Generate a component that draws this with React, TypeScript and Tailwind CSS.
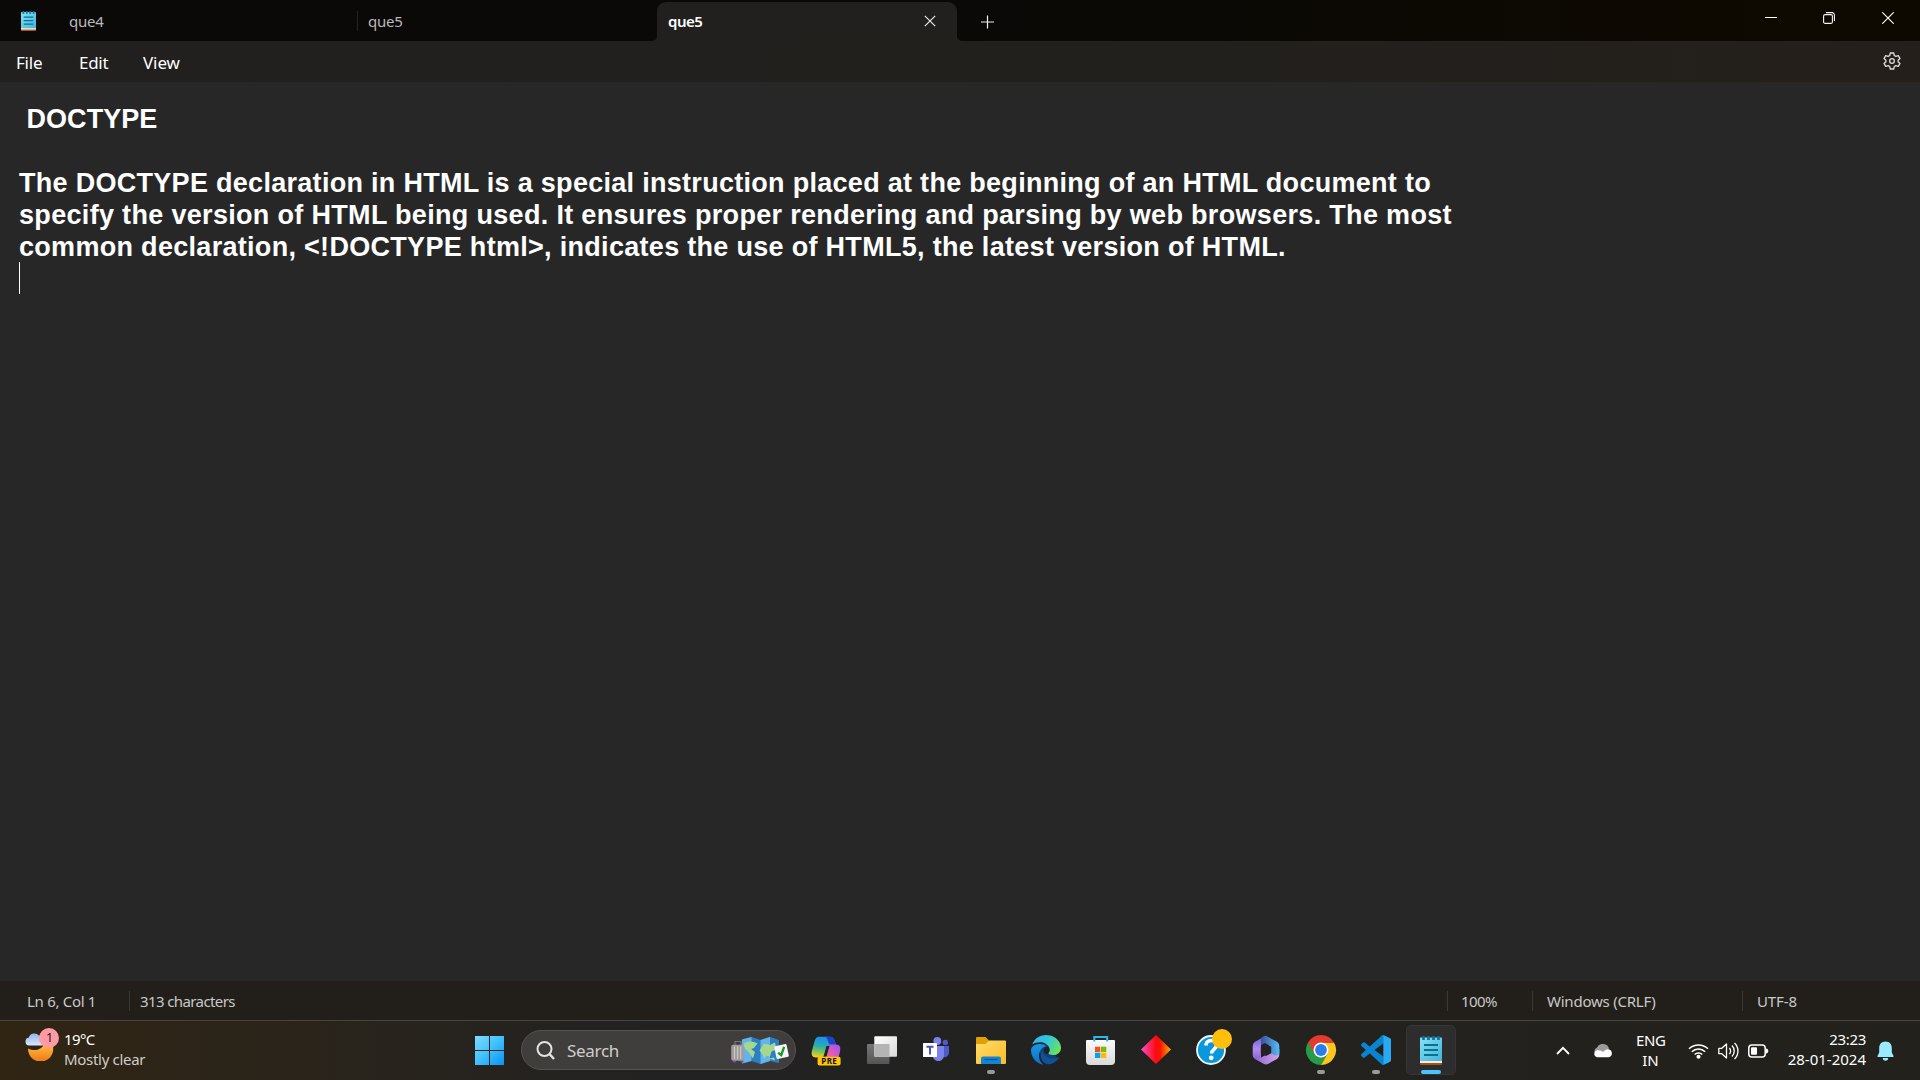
import React from "react";

const Cell = ({ children }: { children: React.ReactNode }) => (
  <svg width="55" height="59" viewBox="0 0 55 59" className="block shrink-0">{children}</svg>
);
const Dot = () => <rect x="23" y="49" width="8" height="4" rx="2" fill="#9a9a9a" />;

const Notepad = ({ className }: { className: string }) => (
  <svg viewBox="0 0 22 29" preserveAspectRatio="none" className={className}>
    <defs>
      <linearGradient id="np" x1="0" y1="0" x2="1" y2="1"><stop stopColor="#86e0f5" /><stop offset="1" stopColor="#42b4d8" /></linearGradient>
    </defs>
    <rect y="24" width="22" height="5" rx="1" fill="#a9510f" />
    <rect y="22" width="22" height="5" fill="#f3ece4" />
    <rect y="1.6" width="22" height="23.4" rx="0.6" fill="url(#np)" />
    <path d="M3.5 0v4M8.5 0v4M13.5 0v4M18.5 0v4" stroke="#0c6f93" strokeWidth="2.6" />
    <path d="M4 9h14M4 14h14M4 19h14" stroke="#0b7094" strokeWidth="1.9" />
  </svg>
);

const Sep = ({ className }: { className: string }) => <div className={"h-5 w-px shrink-0 bg-[#3b3935] " + className} />;

function TitleBar() {
  return (
    <div className="flex h-[41px] bg-linear-to-r from-[#0a0908] via-[#0a0907] via-50% to-[#0e0900] text-[15px] text-[#b9b9b8]">
      <div className="w-[69px] pl-[21px] pt-[11px]"><Notepad className="h-5 w-[15px]" /></div>
      <div className="flex h-[41px] w-[288px] items-center pt-px"><span className="tracking-[-0.25px]">que4</span></div>
      <div className="flex w-[300px] items-center">
        <div className="h-5 w-px bg-[#232220]" />
        <span className="pl-[10px] pt-px tracking-[-0.25px]">que5</span>
      </div>
      <div className="relative mt-[2px] flex w-[300px] items-center rounded-t-[9px] bg-[#21201e] pb-px pl-[11px] font-semibold text-white">
        <span className="tracking-[-0.5px]">que5</span>
        <svg className="absolute -left-[5px] bottom-0" width="5" height="5"><path d="M5 0v5H0A5 5 0 0 0 5 0" fill="#21201e" /></svg>
        <svg className="absolute -right-[5px] bottom-0" width="5" height="5"><path d="M0 0v5h5A5 5 0 0 1 0 0" fill="#21201e" /></svg>
        <svg className="absolute left-[267px] top-[13px]" width="12" height="12"><path d="M.8.8l10.4 10.4M11.2.8L.8 11.2" stroke="#e9e9e9" strokeWidth="1.2" /></svg>
      </div>
      <svg className="ml-[24px] mt-[15px]" width="13" height="14"><path d="M0 7h13M6.5 .5v13" stroke="#f0f0f0" strokeWidth="1.2" /></svg>
      <div className="ml-auto flex pt-[12px]">
        <svg className="mr-[46px]" width="12" height="12"><path d="M0 5.5h12" stroke="#fff" /></svg>
        <svg className="mr-[47px]" width="12" height="12" fill="none" stroke="#f4f4f4" strokeWidth="1.1"><rect x=".6" y="2.6" width="8.8" height="8.8" rx="1.5" /><path d="M3 .6h6a2.4 2.4 0 0 1 2.4 2.4v6" /></svg>
        <svg className="mr-[26px]" width="12" height="12"><path d="M.3.3l11.4 11.4M11.7.3L.3 11.7" stroke="#fff" strokeWidth="1.1" /></svg>
      </div>
    </div>
  );
}

function MenuBar() {
  return (
    <div className="flex h-[41px] items-center bg-linear-to-r from-[#21201f] via-[#21201d] to-[#241f1b] pl-4 text-[17px] text-white">
      <span className="w-[63px] pt-[2px] tracking-[-0.2px]">File</span>
      <span className="w-[64px] pt-[2px] tracking-[-0.3px]">Edit</span>
      <span className="pt-[2px] tracking-[-0.1px]">View</span>
      <svg className="mb-px ml-auto mr-[19px]" width="18" height="18" fill="none" stroke="#dedede" strokeWidth="1.3" strokeLinejoin="round">
        <path d="M7.300 1h3.400l.6 2.500 1.500.9 2.500-.8 1.700 3-1.900 1.700v1.400l1.900 1.700-1.700 3-2.500-.8-1.500.9-.6 2.500H7.300l-.6-2.500-1.500-.9-2.500.8-1.700-3 1.900-1.700V8.300L1 6.600l1.700-3 2.500.8 1.500-.9z" />
        <circle cx="9" cy="9" r="2.300" />
      </svg>
    </div>
  );
}

function Editor() {
  return (
    <div className="h-[899px] bg-[#272727] pl-[19px] pt-[21px] font-['Liberation_Sans',sans-serif] text-[27px] font-bold leading-8 text-white">
      <div className="whitespace-pre pl-[7.500px] tracking-[0.05px]">DOCTYPE</div>
      <div className="h-8" />
      <div className="whitespace-pre tracking-[0.290px]">The DOCTYPE declaration in HTML is a special instruction placed at the beginning of an HTML document to</div>
      <div className="whitespace-pre tracking-[0.320px]">specify the version of HTML being used. It ensures proper rendering and parsing by web browsers. The most</div>
      <div className="whitespace-pre tracking-[0.300px]">common declaration, &lt;!DOCTYPE html&gt;, indicates the use of HTML5, the latest version of HTML.</div>
      <div className="-mt-px h-8 w-px bg-white" />
    </div>
  );
}

function StatusBar() {
  return (
    <div className="flex h-[39px] items-center bg-[#221f1b] pl-[27px] pt-px text-[15px] text-[#c9c8c7]">
      <span className="w-[102px] tracking-[-0.3px]">Ln 6, Col 1</span>
      <Sep className="mr-[10px]" />
      <span className="tracking-[-0.6px]">313 characters</span>
      <div className="ml-auto flex w-[473px] items-center">
        <Sep className="mr-[13px]" /><span className="w-[71px] tracking-[-0.6px]">100%</span>
        <Sep className="mr-[14px]" /><span className="w-[195px] tracking-[-0.230px]">Windows (CRLF)</span>
        <Sep className="mr-[14px]" /><span className="tracking-[-0.1px]">UTF-8</span>
      </div>
    </div>
  );
}

function Weather() {
  return (
    <svg width="36" height="34" viewBox="0 0 36 34" className="block">
      <defs>
        <linearGradient id="mn" x1="0" y1="0" x2="0" y2="1"><stop stopColor="#ffc13a" /><stop offset="1" stopColor="#f0791c" /></linearGradient>
        <linearGradient id="cl" x1="0" y1="0" x2="0" y2="1"><stop stopColor="#8fb4ee" /><stop offset="1" stopColor="#dbe8fb" /></linearGradient>
      </defs>
      <path d="M3 21.500c7 3.500 14 1 16.500-5l8.500 2c1.500 9-4 16-12.500 16C8.500 34.500 3 29 3 21.500z" fill="url(#mn)" />
      <path d="M4 18.500a4 4 0 0 1-.2-7.900A6 6 0 0 1 14 8.500a5 5 0 0 1 3 10z" fill="url(#cl)" />
      <circle cx="24" cy="11" r="10" fill="#ff99a4" />
      <text x="24.500" y="15.300" textAnchor="middle" fontSize="12.500" fill="#1a1a1a" fontFamily="Noto Sans">1</text>
    </svg>
  );
}

function SearchArt() {
  return (
    <svg width="60" height="30" viewBox="0 0 60 30" className="block">
      <path d="M12 4.500L21.500 2 30.500 5 40 2l9 3v23l-9-2-9.500 3-9-3-9.500 2.500z" fill="#2b7fc4" />
      <path d="M12 4.500L21.500 2v24L12 28.500zM30.500 5L40 2v24l-9.500 3z" fill="#62b4ea" />
      <path d="M13.500 9c3-3 8-3.500 14-.5l-3.500 4.500-3 1 4 3-2 6.500-4-6-4-4z" fill="#a5d88d" />
      <path d="M29.500 15.500l4.500-7 6 1.500 5-2.500 1.500 7-5 2-1.500 5-4-1-1.500 3.500-2-4.500zM39 23.500l5-1 1 3z" fill="#a5d88d" />
      <path d="M5 10V6.500h6V10" fill="none" stroke="#77727c" strokeWidth="1.200" />
      <path d="M3 26.500h3M10.500 26.500h3" stroke="#7445c0" strokeWidth="2" />
      <rect x="1.200" y="9.800" width="12.800" height="16" rx="2" fill="#a09d9c" />
      <path d="M4.500 11.500v12.500M7.600 11.500v12.500M10.700 11.500v12.500" stroke="#cbc8c6" strokeWidth="1.100" />
      <g transform="rotate(-12 51.500 16.500)"><rect x="45.300" y="10" width="12.500" height="13" rx="1" fill="#f7f5fb" /><path d="M48 17l2.500 3 4.500-7.500" fill="none" stroke="#189c26" strokeWidth="2.400" /></g>
    </svg>
  );
}

function Apps() {
  return (
    <div className="flex">
      <Cell>
        <defs>
          <linearGradient id="ca" x1=".4" y1="0" x2=".2" y2="1"><stop stopColor="#1b8df0" /><stop offset=".45" stopColor="#2aaeb0" /><stop offset=".7" stopColor="#7cc455" /><stop offset="1" stopColor="#ffd020" /></linearGradient>
          <linearGradient id="cb" x1="1" y1="0" x2="0" y2="1"><stop stopColor="#9a55f5" /><stop offset=".5" stopColor="#e75bb4" /><stop offset="1" stopColor="#ff8b4a" /></linearGradient>
        </defs>
        <path d="M20 15.700h11c3 0 4 2 5 5l1 3.300h-5.500c-2 0-3 1.500-4 4.500l-1.500 5c-.8 2-2 3-4 3H17c-4 0-5-3-4-7l2.500-9c.8-3 2-4.800 4.500-4.800z" fill="url(#ca)" />
        <path d="M26 15.700h5c3 0 4 2 5 5l1 3.300h-5c-3 0-3-8.300-6-8.300z" fill="#1b43d0" />
        <path d="M32 23.500h5c4 0 5 3 4 7l-2 8c-1 3-2 4-5 4H24c-3 0-3-3-2-5h2c2 0 3-2 4-6l1.500-5c.5-1.700 1-3 2.500-3z" fill="url(#cb)" />
        <path d="M27.500 25l-3 10.500h3L30.500 25z" fill="#222" />
        <rect x="18.600" y="35.700" width="23" height="8.800" rx="2" fill="#ffc60a" />
        <text x="30.300" y="43" textAnchor="middle" fontSize="8" letterSpacing=".4" fontWeight="700" fontFamily="Noto Sans" fill="#111">PRE</text>
      </Cell>
      <Cell>
        <defs><linearGradient id="tv" x1="0" y1="0" x2="1" y2="1"><stop stopColor="#fff" /><stop offset="1" stopColor="#d9d9d9" /></linearGradient><linearGradient id="tg" x1="0" y1="0" x2="0" y2="1"><stop stopColor="#777" /><stop offset="1" stopColor="#555" /></linearGradient></defs>
        <rect x="13" y="23" width="22.500" height="20" rx="1" fill="url(#tg)" />
        <rect x="20.300" y="15.300" width="22.700" height="20.400" rx="1" fill="url(#tv)" />
        <path d="M20.300 23h15.200v12.700H21.300a1 1 0 0 1-1-1z" fill="#b4b4b4" />
      </Cell>
      <Cell>
        <circle cx="28.300" cy="20" r="3.900" fill="#7b83eb" /><circle cx="36.300" cy="21.500" r="2.700" fill="#5059c9" />
        <path d="M31 25h9v7a4.500 4.500 0 0 1-7 3.500z" fill="#5059c9" />
        <path d="M23.500 25H35v9c0 4-3 6-5.500 6s-6-2-6-6z" fill="#7b83eb" />
        <rect x="14" y="22" width="14" height="14" rx=".6" fill="#fff" />
        <path d="M17.500 25.700h7M21 25v8.500" stroke="#4b53bc" strokeWidth="2" />
      </Cell>
      <Cell>
        <defs><linearGradient id="fe" x1="0" y1="0" x2="1" y2="1"><stop stopColor="#ffdc6b" /><stop offset="1" stopColor="#fcbc23" /></linearGradient></defs>
        <path d="M12 17a1 1 0 0 1 1-1h8.500l3.500 3.500V27H12z" fill="#e0a000" />
        <path d="M12 23h9.500l3.500-3.500h16a1 1 0 0 1 1 1V42a1 1 0 0 1-1 1H13a1 1 0 0 1-1-1z" fill="url(#fe)" />
        <path d="M17 43v-5.500a2 2 0 0 1 2-2h16a2 2 0 0 1 2 2V43z" fill="#1383d3" /><path d="M20.500 38.500h13" stroke="#07549b" strokeWidth="1.200" />
        <Dot />
      </Cell>
      <Cell>
        <defs>
          <linearGradient id="ea" x1="0" y1=".2" x2="1" y2=".6"><stop stopColor="#35b5ec" /><stop offset=".45" stopColor="#30c6dd" /><stop offset="1" stopColor="#6be35c" /></linearGradient>
          <linearGradient id="eb" x1="0" y1="0" x2="0" y2="1"><stop stopColor="#1898e0" /><stop offset="1" stopColor="#0c6ecb" /></linearGradient>
        </defs>
        <g transform="translate(12 14) scale(1.25)">
          <path d="M6 7h8l2 7 5 4-8 4-5-3z" fill="#123f7c" />
          <circle cx="13.200" cy="12.200" r="2.900" fill="#222" />
          <path fill="#10529a" d="M21.860 17.860q.14 0 .25.12.1.13.1.25t-.11.33l-.32.46-.43.53-.44.5q-.26.25-.38.37l-.22.23q-.58.53-1.34 1.040-.76.51-1.600.91-.86.4-1.740.64t-1.670.24q-.9 0-1.690-.28-.8-.28-1.480-.78-.68-.5-1.220-1.170-.53-.66-.92-1.440-.38-.77-.58-1.600-.2-.83-.2-1.670 0-1 .32-1.960.33-.97.87-1.800.14.95.55 1.770.41.82 1.020 1.500.6.68 1.380 1.210.78.54 1.640.9.86.36 1.770.56.92.2 1.800.2 1.120 0 2.180-.24 1.060-.23 2.060-.72l.2-.1.2-.05z" />
          <path fill="url(#eb)" d="M6.360 16.590q0 1.100.27 2.150.27 1.060.78 2.030.51.96 1.240 1.770.74.82 1.660 1.400-1.470-.2-2.800-.74-1.330-.55-2.480-1.370-1.150-.83-2.080-1.900-.92-1.070-1.580-2.330T.36 14.940Q0 13.540 0 12.060q0-.81.32-1.490.31-.68.83-1.230.53-.55 1.200-.96.66-.4 1.350-.66.74-.27 1.500-.39.78-.12 1.550-.12.7 0 1.420.1.72.12 1.400.35.68.23 1.320.57.63.35 1.160.83-.35 0-.7.07-.33.07-.65.23v-.02q-.63.28-1.200.74-.57.46-1.050 1.040-.48.58-.87 1.260-.38.67-.65 1.390-.27.71-.42 1.440-.15.72-.15 1.380z" />
          <path fill="url(#ea)" d="M11.960.06q1.700 0 3.330.39 1.630.38 3.070 1.150 1.430.77 2.620 1.930 1.180 1.160 1.980 2.700.49.94.76 1.960.28 1 .28 2.080 0 .89-.23 1.700-.24.8-.69 1.480-.45.68-1.100 1.220-.64.53-1.450.88-.54.24-1.110.36-.58.13-1.160.13-.42 0-.97-.03-.54-.03-1.100-.12-.55-.1-1.050-.28-.5-.19-.84-.5-.12-.09-.23-.24-.1-.16-.1-.33 0-.15.16-.35.16-.2.35-.5.2-.28.36-.68.16-.4.16-.95 0-1.060-.4-1.960-.4-.91-1.060-1.640-.66-.74-1.520-1.280-.86-.55-1.790-.89-.84-.3-1.720-.44-.87-.14-1.760-.14-1.550 0-3.060.45T.94 7.550q.71-1.740 1.810-3.130 1.100-1.380 2.520-2.350Q6.680 1.100 8.370.58q1.700-.52 3.580-.52Z" />
        </g>
      </Cell>
      <Cell>
        <defs><linearGradient id="ms" x1="0" y1="0" x2="0" y2="1"><stop stopColor="#fafafa" /><stop offset="1" stopColor="#d9d9d9" /></linearGradient></defs>
        <path d="M12 20a1 1 0 0 1 1-1h27a1 1 0 0 1 1 1v20a4 4 0 0 1-4 4H16a4 4 0 0 1-4-4z" fill="url(#ms)" />
        <path d="M20.300 20.500V16h12.900v4.500" fill="none" stroke="#2ab8f0" strokeWidth="2" />
        <path d="M21 25.700h5.300v5.300H21z" fill="#f25022" /><path d="M27 25.700h5.300v5.300H27z" fill="#7fba00" /><path d="M21 31.700h5.300v5.300H21z" fill="#00a4ef" /><path d="M27 31.700h5.300v5.300H27z" fill="#ffb900" />
      </Cell>
      <Cell>
        <defs><linearGradient id="dm"><stop stopColor="#ff4fd0" /><stop offset=".5" stopColor="#fb0a0a" /><stop offset=".65" stopColor="#fb1505" /><stop offset="1" stopColor="#ffb000" /></linearGradient></defs>
        <path d="M27 14l15 14.500L27 43 12 28.500z" fill="url(#dm)" />
      </Cell>
      <Cell>
        <circle cx="27" cy="29" r="14" fill="#0a98dc" stroke="#f2f6f8" strokeWidth="1.800" />
        <path d="M21.800 24.500c.4-3.500 2.700-5 5.400-5 3.200 0 5.400 2 5.400 4.600 0 4-5 4-5 8.400" fill="none" stroke="#fff" strokeWidth="3.600" /><circle cx="27.200" cy="36.800" r="2.400" fill="#fff" />
        <circle cx="38" cy="18" r="10" fill="#ffbf0c" />
      </Cell>
      <Cell>
        <defs>
          <linearGradient id="oa" x1="0" y1="0" x2="0" y2="1"><stop stopColor="#6a5ad8" /><stop offset=".5" stopColor="#b18bee" /><stop offset="1" stopColor="#7c5bd0" /></linearGradient>
          <linearGradient id="ob"><stop stopColor="#3c4f9c" /><stop offset="1" stopColor="#55bdf5" /></linearGradient>
          <linearGradient id="oc"><stop stopColor="#8d68cc" /><stop offset="1" stopColor="#d6a4ef" /></linearGradient>
        </defs>
        <path d="M27 14.700l-11 6a5 5 0 0 0-2.300 4v9.500a4 4 0 0 0 2 3.500L22 41V24z" fill="url(#oa)" />
        <path d="M40.300 28v6a5 5 0 0 1-2.300 4l-8.500 4.700a5 5 0 0 1-5 0L15.700 37.700c2 .8 4 .3 6-1L32 31z" fill="url(#oc)" />
        <path d="M27 14.700l11 6a5 5 0 0 1 2.300 4V32c0 3-4 3-6 1.500L32 32v-6l-6-4-4 2v-5c0-2.500 2-4.300 5-4.300z" fill="url(#ob)" />
        <path d="M27 23l5.200 3v6.200L27 35l-5.200-2.800V26z" fill="#222" />
      </Cell>
      <Cell>
        <path d="M14 21.500a15 15 0 0 0 13 22.500l6.500-11.250z" fill="#269c48" />
        <path d="M27 44a15 15 0 0 0 13-22.500H27l6.500 11.250z" fill="#fdc51f" />
        <path d="M14 21.500A15 15 0 0 1 40 21.500H27v7.500l-6.500 3.750z" fill="#e33b2e" />
        <circle cx="27" cy="29" r="7.500" fill="#fff" /><circle cx="27" cy="29" r="5.900" fill="#2b7de9" />
        <Dot />
      </Cell>
      <Cell>
        <g transform="translate(12 14) scale(1.25)">
          <path fill="#0a84cf" d="M23.150 2.587L18.210.21a1.494 1.494 0 0 0-1.705.29l-9.460 8.630-4.120-3.128a.999.999 0 0 0-1.276.057L.327 7.261A1 1 0 0 0 .326 8.740L3.899 12 .326 15.260a1 1 0 0 0 .001 1.479L1.650 17.940a.999.999 0 0 0 1.276.057l4.120-3.128 9.460 8.630a1.492 1.492 0 0 0 1.704.29l4.942-2.377A1.500 1.500 0 0 0 24 20.060V3.939a1.500 1.500 0 0 0-.85-1.352zm-5.146 14.861L10.826 12l7.178-5.448v10.896z" />
          <path fill="#2aaaf3" d="M18 .2l5.150 2.387A1.500 1.500 0 0 1 24 3.939V20.060a1.500 1.500 0 0 1-.85 1.352L18 23.800z" />
        </g>
        <Dot />
      </Cell>
      <div className="h-[59px] w-[55px]">
        <div className="ml-[2px] mt-1 h-[50px] w-[50px] rounded-[5px] border border-[#353535] bg-[#2d2d2d] pl-[13px] pt-[10px]">
          <Notepad className="h-[29px] w-[22px]" />
          <div className="ml-px mt-[5px] h-1 w-5 rounded-full bg-[#4cc2ff]" />
        </div>
      </div>
    </div>
  );
}

function Tray() {
  return (
    <div className="flex h-[59px] items-center text-[15px] leading-5 text-white">
      <svg width="14" height="9" className="mr-[23px]"><path d="M1 8l6-6.200L13 8" fill="none" stroke="#fff" strokeWidth="1.800" /></svg>
      <svg width="20" height="14" viewBox="0 0 20 14" className="mr-[23px]"><path d="M4 11a4 4 0 0 1 0-7.500 6.500 6.500 0 0 1 12 1L10 11z" fill="#9b9b9b" /><path d="M4 13.300a3.500 3.500 0 0 1-.5-6.700c3-.8 5 .4 6.500 1.400 1.500-1.500 3-3 5.500-2.800a4.200 4.200 0 0 1 .5 8.100z" fill="#fff" /></svg>
      <div className="mb-[2px] mr-[23px] w-[29px] text-center"><div className="tracking-[-0.4px]">ENG</div><div>IN</div></div>
      <svg width="21" height="16" viewBox="0 0 21 16" className="mr-[9px]" fill="none" stroke="#fff" strokeWidth="1.500"><path d="M1 5.800a13.500 13.500 0 0 1 19 0M3.800 8.700a9.500 9.500 0 0 1 13.400 0M6.700 11.500a5.400 5.400 0 0 1 7.600 0" /><circle cx="10.500" cy="13.700" r="1.300" fill="#fff" /></svg>
      <svg width="21" height="18" viewBox="0 0 21 18" className="mr-[9px]" fill="none" stroke="#fff" strokeWidth="1.300" strokeLinejoin="round"><path d="M.8 6.300h3L8.500 2v14l-4.700-4.300h-3zM11.300 6a4 4 0 0 1 0 6M13.900 3.500a7.600 7.600 0 0 1 0 11M16.500 1a11 11 0 0 1 0 16" /></svg>
      <svg width="21" height="14" viewBox="0 0 21 14" className="mr-[18px]"><rect x=".8" y="1" width="16.400" height="12" rx="3" fill="none" stroke="#fff" strokeWidth="1.500" /><rect x="3" y="3.200" width="6" height="7.600" rx="1" fill="#fff" /><path d="M18 4.500c1.500 0 2.300 1 2.300 2.500S19.500 9.500 18 9.500z" fill="#fff" /></svg>
      <div className="mb-[4px] w-[79px] text-right"><div className="tracking-[-0.3px]">23:23</div><div className="whitespace-nowrap">28-01-2024</div></div>
      <svg width="17" height="20" viewBox="0 0 17 20" className="ml-[11px] mr-[26px]"><path d="M8.500.5c4 0 6.300 2.800 6.300 6.500v4.500l1.700 3.500c.2.700-.1 1-.8 1H1.300c-.7 0-1-.3-.8-1l1.700-3.500V7C2.200 3.300 4.500.5 8.500.5z" fill="#99ebff" /><path d="M5.800 17h5.400a2.700 2.700 0 0 1-5.400 0z" fill="#99ebff" /></svg>
    </div>
  );
}

function Taskbar() {
  return (
    <div className="flex h-[60px] border-t border-[#484540] bg-linear-to-r from-[#302513] via-[#222222] via-35% to-[#22211b]">
      <div className="flex w-[474px] pl-[25px]">
        <div className="pt-[6px]"><Weather /></div>
        <div className="pl-[3px] pt-[8px] text-[15px] leading-5 text-white"><div className="tracking-[-0.6px]">19°C</div><div className="tracking-[-0.3px] text-[#d0cdc8]">Mostly clear</div></div>
      </div>
      <svg width="31" height="59" viewBox="0 0 31 59"><defs><linearGradient id="wn" gradientUnits="userSpaceOnUse" x1="1" y1="15" x2="30" y2="44"><stop stopColor="#7fdcff" /><stop offset=".5" stopColor="#40c0fb" /><stop offset="1" stopColor="#0893f5" /></linearGradient></defs><path d="M1 15h14v14H1zM16 15h14v14H16zM1 30h14v14H1zM16 30h14v14H16z" fill="url(#wn)" /></svg>
      <div className="ml-4 mt-[9px] flex h-[40px] w-[275px] items-center rounded-full border border-[#555250] bg-[#403e3c]">
        <svg className="ml-[14px]" width="19" height="19" fill="none" stroke="#e2e2e2" strokeWidth="2"><circle cx="8.500" cy="8" r="7" /><path d="M13.500 13l4.500 5" strokeWidth="2.400" /></svg>
        <span className="ml-[12px] pt-px text-[17px] tracking-[-0.3px] text-[#cfcdcc]">Search</span>
        <div className="ml-auto mr-[5px]"><SearchArt /></div>
      </div>
      <div className="ml-[3px]"><Apps /></div>
      <div className="ml-auto"><Tray /></div>
    </div>
  );
}

export default function App() {
  return (
    <div className="h-[1080px] w-[1920px] overflow-hidden bg-[#272727] font-['Noto_Sans',sans-serif]">
      <TitleBar />
      <MenuBar />
      <Editor />
      <StatusBar />
      <Taskbar />
    </div>
  );
}
